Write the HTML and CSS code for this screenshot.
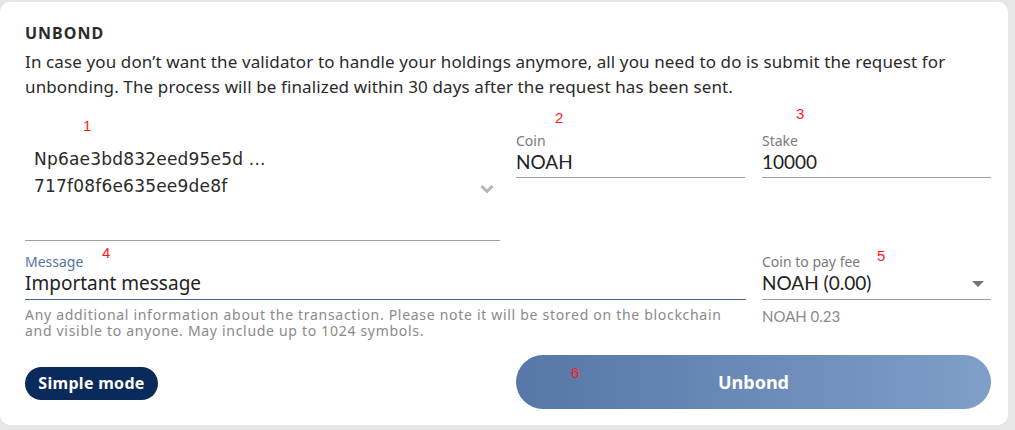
FILE: index.html
```html
<!DOCTYPE html>
<html>
<head>
<meta charset="utf-8">
<link rel="stylesheet" href="styles.css">
</head>
<body>
<div class="card">
  <h1 class="title">UNBOND</h1>
  <p class="desc">In case you don’t want the validator to handle your holdings anymore, all you need to do is submit the request for unbonding. The process will be finalized within 30 days after the request has been sent.</p>

  <div class="row row1">
    <div class="field validator">
      <div class="val-text">
        <div>Np6ae3bd832eed95e5d ...</div>
        <div>717f08f6e635ee9de8f</div>
      </div>
      <svg class="chev" width="14" height="10" viewBox="0 0 14 10"><path d="M1.5 2 L7 7.5 L12.5 2" fill="none" stroke="#b5b5b5" stroke-width="3"/></svg>
    </div>
    <div class="field small">
      <div class="label">Coin</div>
      <div class="value">NOAH</div>
    </div>
    <div class="field small">
      <div class="label">Stake</div>
      <div class="value">10000</div>
    </div>
  </div>

  <div class="row row2">
    <div class="msg">
      <div class="field message">
        <div class="label blue">Message</div>
        <div class="value big">Important message</div>
      </div>
      <div class="help">Any additional information about the transaction. Please note it will be stored on the blockchain and visible to anyone. May include up to 1024 symbols.</div>
    </div>
    <div class="fee">
      <div class="field feefield">
        <div class="label">Coin to pay fee</div>
        <div class="value">NOAH (0.00)</div>
        <svg class="caret" width="12" height="6" viewBox="0 0 12 6"><path d="M0 0 H12 L6 6 Z" fill="#757575"/></svg>
      </div>
      <div class="fee-help">NOAH 0.23</div>
    </div>
  </div>

  <div class="row row3">
    <button class="simple">Simple mode</button>
    <button class="unbond">Unbond</button>
  </div>

  <span class="mark m1">1</span>
  <span class="mark m2">2</span>
  <span class="mark m3">3</span>
  <span class="mark m4">4</span>
  <span class="mark m5">5</span>
  <span class="mark m6">6</span>
</div>
</body>
</html>
```

FILE: styles.css
```css
html, body {
  margin: 0;
  padding: 0;
  background: #e6e6e6;
}
body {
  width: 1015px;
  height: 430px;
  padding: 2px 7px 5px 0;
  box-sizing: border-box;
  font-family: "Noto Sans", "Open Sans", sans-serif;
  color: #2a2a2a;
}
.card {
  position: relative;
  background: #fff;
  border-radius: 10px;
  height: 100%;
  box-sizing: border-box;
  padding: 22px 17px 0 25px;
}
.title {
  margin: 0;
  font-size: 16px;
  font-weight: 700;
  letter-spacing: 1px;
  line-height: 18px;
  color: #2b2b2b;
}
.desc {
  margin: 7px 0 0;
  font-size: 17px;
  line-height: 25px;
  letter-spacing: 0.12px;
  color: #2a2a2a;
  width: 950px;
}
.row {
  display: flex;
}
.row1 {
  margin-top: 34px;
  gap: 16px;
}
.field {
  position: relative;
  border-bottom: 1px solid #9e9e9e;
}
.validator {
  width: 475px;
  height: 111px;
  display: flex;
  align-items: flex-start;
  justify-content: space-between;
  margin-top: -4px;
}
.val-text {
  padding: 17px 0 0 9px;
  font-family: "DejaVu Sans", sans-serif;
  font-size: 17px;
  line-height: 27px;
  color: #2a2a2a;
  letter-spacing: 0.2px;
}
.chev {
  margin: 55px 6px 0 0;
}
.small {
  width: 229px;
  height: 44px;
  align-self: flex-start;
}
.small + .small { margin-left: 1px; }
.label {
  font-size: 14px;
  line-height: 16px;
  color: #7a7a7a;
}
.label.blue { color: #5574a3; }
.value {
  font-family: "Lato", sans-serif;
  font-size: 19px;
  line-height: 26px;
  color: #222;
}
.value.big {
  font-family: "Noto Sans", sans-serif;
  font-size: 19px;
  letter-spacing: 0;
}
.row2 {
  margin-top: 13px;
  gap: 16px;
}
.msg { width: 721px; }
.message {
  border-bottom: 1px solid #4a6897;
  height: 45px;
}
.help {
  font-size: 14px;
  line-height: 16px;
  color: #8a8a8a;
  margin-top: 7px;
  letter-spacing: 0.7px;
}
.fee { width: 229px; }
.feefield {
  height: 45px;
  border-bottom: 1px solid #9e9e9e;
}
.fee-help {
  font-family: "Lato", sans-serif;
  font-size: 15px;
  line-height: 18px;
  color: #8a8a8a;
  margin-top: 7px;
}
.caret {
  position: absolute;
  right: 7px;
  top: 27px;
}
.row3 {
  margin-top: 16px;
  align-items: center;
}
.simple {
  width: 133px;
  height: 33px;
  border: none;
  border-radius: 17px;
  background: #0a2a5b;
  color: #fff;
  font-family: "Noto Sans", sans-serif;
  font-weight: 700;
  font-size: 16px;
  letter-spacing: 0.3px;
  padding: 0;
  margin-top: 2px;
}
.unbond {
  margin-left: 358px;
  width: 475px;
  height: 54px;
  border: none;
  border-radius: 27px;
  background: linear-gradient(90deg, #5677a7 0%, #7f9ec8 100%);
  color: #fff;
  font-family: "Noto Sans", sans-serif;
  font-weight: 700;
  font-size: 18px;
  padding: 0;
}
.mark {
  position: absolute;
  color: #ff1a1a;
  font-family: "Liberation Sans", sans-serif;
  font-size: 15px;
  font-weight: 400;
  line-height: 16px;
}
.m1 { left: 83px; top: 116px; }
.m2 { left: 555px; top: 108px; }
.m3 { left: 796px; top: 104px; }
.m4 { left: 102px; top: 243px; }
.m5 { left: 877px; top: 246px; }
.m6 { left: 571px; top: 363px; }
```
